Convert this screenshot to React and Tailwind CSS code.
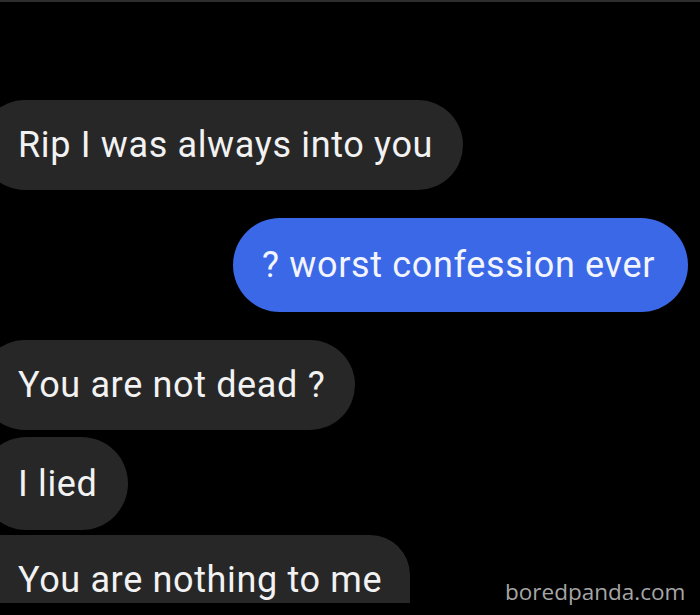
export default function App() {
  const gray = "bg-[#272727]";
  const txt = "text-[36px] tracking-[0.65px] leading-none whitespace-nowrap";
  return (
    <div className="relative w-[700px] h-[615px] bg-black overflow-hidden" style={{ fontFamily: "Roboto, 'Liberation Sans', sans-serif" }}>
      <div className="h-[2px] bg-[#2e2e2e]" />
      <div className="flex flex-col pt-[98px]">
        {/* incoming */}
        <div className={`self-start ml-[-20px] h-[90px] flex items-center pl-[38px] pr-[30px] rounded-full ${gray}`}>
          <span className={`${txt} text-[#f2f2f2]`}>Rip I was always into you</span>
        </div>
        {/* outgoing */}
        <div className="self-start ml-[233px] mt-[28px] h-[94px] flex items-center pl-[29px] pr-[33px] rounded-full bg-[#3b68e6]">
          <span className={`${txt} text-[#f2f4ff]`}>? worst confession ever</span>
        </div>
        <div className={`self-start ml-[-20px] mt-[28px] h-[90px] flex items-center pl-[38px] pr-[30px] rounded-full ${gray}`}>
          <span className={`${txt} text-[#f2f2f2]`}>You are not dead ?</span>
        </div>
        <div className={`self-start ml-[-20px] mt-[7px] h-[93px] flex items-center pl-[38px] pr-[30px] rounded-full ${gray}`}>
          <span className={`${txt} text-[#f2f2f2]`}>I lied</span>
        </div>
        <div className={`self-start ml-[-20px] mt-[5px] h-[68px] flex items-end pb-[5px] pl-[38px] pr-[28px] rounded-tr-[40px] ${gray}`}>
          <span className={`${txt} text-[#f2f2f2]`}>You are nothing to me</span>
        </div>
      </div>
      <div className="absolute left-[505px] top-[581px] text-[22.5px] leading-none text-[#a6a6a6]" style={{ fontFamily: "'Open Sans', sans-serif" }}>
        boredpanda.com
      </div>
    </div>
  );
}
